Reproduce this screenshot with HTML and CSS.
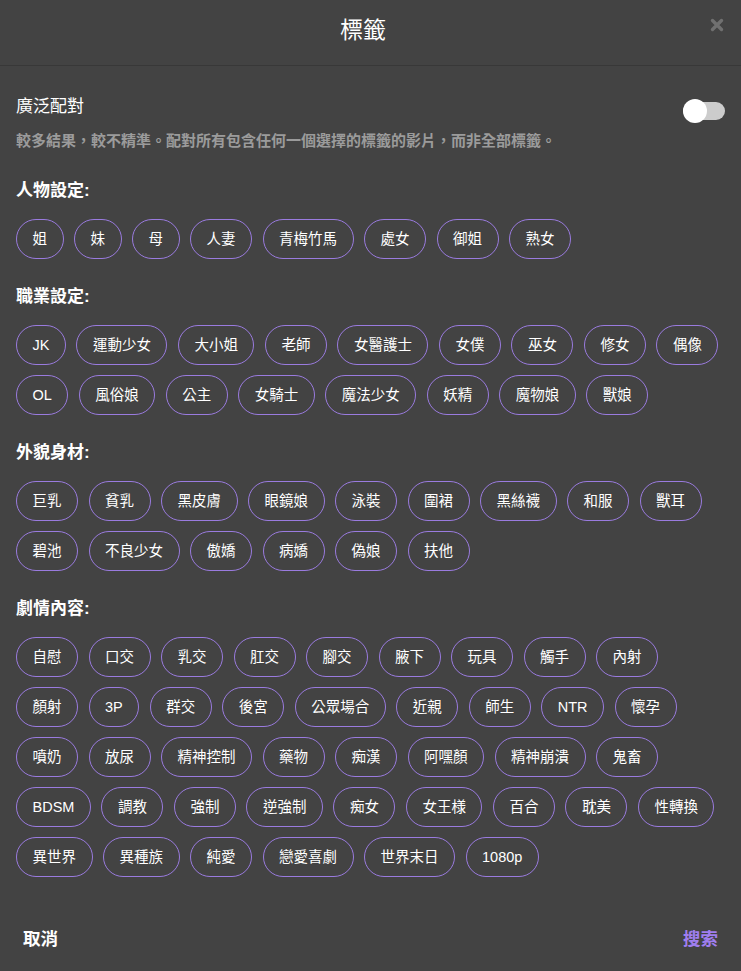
FILE: index.html
```html
<!DOCTYPE html>
<html lang="zh-Hant">
<head>
<meta charset="utf-8">
<title>標籤</title>
<link rel="stylesheet" href="styles.css">
</head>
<body>
<div class="modal">
  <header class="modal-header">
    <h1 class="modal-title">標籤</h1>
    <button class="close-btn" aria-label="close">
      <svg width="14" height="14" viewBox="0 0 14 14"><path d="M2.5 2.5 L11.5 11.5 M11.5 2.5 L2.5 11.5" stroke="#707070" stroke-width="3.4" stroke-linecap="round"/></svg>
    </button>
  </header>
  <main class="modal-body">
    <div class="option-row">
      <span class="option-label">廣泛配對</span>
      <span class="toggle"><span class="toggle-knob"></span></span>
    </div>
    <p class="option-desc">較多結果，較不精準。配對所有包含任何一個選擇的標籤的影片，而非全部標籤。</p>

    <section class="group">
      <h2 class="group-title">人物設定:</h2>
      <div class="tags">
        <span class="tag">姐</span><span class="tag">妹</span><span class="tag">母</span><span class="tag">人妻</span><span class="tag">青梅竹馬</span><span class="tag">處女</span><span class="tag">御姐</span><span class="tag">熟女</span>
      </div>
    </section>

    <section class="group">
      <h2 class="group-title">職業設定:</h2>
      <div class="tags">
        <span class="tag">JK</span><span class="tag">運動少女</span><span class="tag">大小姐</span><span class="tag">老師</span><span class="tag">女醫護士</span><span class="tag">女僕</span><span class="tag">巫女</span><span class="tag">修女</span><span class="tag">偶像</span><span class="tag">OL</span><span class="tag">風俗娘</span><span class="tag">公主</span><span class="tag">女騎士</span><span class="tag">魔法少女</span><span class="tag">妖精</span><span class="tag">魔物娘</span><span class="tag">獸娘</span>
      </div>
    </section>

    <section class="group">
      <h2 class="group-title">外貌身材:</h2>
      <div class="tags">
        <span class="tag">巨乳</span><span class="tag">貧乳</span><span class="tag">黑皮膚</span><span class="tag">眼鏡娘</span><span class="tag">泳裝</span><span class="tag">圍裙</span><span class="tag">黑絲襪</span><span class="tag">和服</span><span class="tag">獸耳</span><span class="tag">碧池</span><span class="tag">不良少女</span><span class="tag">傲嬌</span><span class="tag">病嬌</span><span class="tag">偽娘</span><span class="tag">扶他</span>
      </div>
    </section>

    <section class="group">
      <h2 class="group-title">劇情內容:</h2>
      <div class="tags">
        <span class="tag">自慰</span><span class="tag">口交</span><span class="tag">乳交</span><span class="tag">肛交</span><span class="tag">腳交</span><span class="tag">腋下</span><span class="tag">玩具</span><span class="tag">觸手</span><span class="tag">內射</span><span class="tag">顏射</span><span class="tag">3P</span><span class="tag">群交</span><span class="tag">後宮</span><span class="tag">公眾場合</span><span class="tag">近親</span><span class="tag">師生</span><span class="tag">NTR</span><span class="tag">懷孕</span><span class="tag">噴奶</span><span class="tag">放尿</span><span class="tag">精神控制</span><span class="tag">藥物</span><span class="tag">痴漢</span><span class="tag">阿嘿顏</span><span class="tag">精神崩潰</span><span class="tag">鬼畜</span><span class="tag">BDSM</span><span class="tag">調教</span><span class="tag">強制</span><span class="tag">逆強制</span><span class="tag">痴女</span><span class="tag">女王様</span><span class="tag">百合</span><span class="tag">耽美</span><span class="tag">性轉換</span><span class="tag">異世界</span><span class="tag">異種族</span><span class="tag">純愛</span><span class="tag">戀愛喜劇</span><span class="tag">世界末日</span><span class="tag">1080p</span>
      </div>
    </section>
  </main>
  <footer class="modal-footer">
    <button class="footer-btn">取消</button>
    <button class="footer-btn primary">搜索</button>
  </footer>
</div>
</body>
</html>
```

FILE: styles.css
```css
html, body {
  margin: 0;
  padding: 0;
  background: #434343;
}

body {
  font-family: "Liberation Sans", "Noto Sans CJK TC", sans-serif;
  color: #ffffff;
}

.modal {
  width: 741px;
  min-height: 971px;
  background: #434343;
}

.modal-header {
  position: relative;
  height: 59px;
  border-bottom: 1px solid #383838;
  display: flex;
  align-items: center;
  justify-content: center;
  padding: 0 15px 6px 0;
}

.modal-title {
  margin: 0;
  font-size: 23px;
  font-weight: 400;
  line-height: 28px;
  color: #ffffff;
}

.close-btn {
  position: absolute;
  right: 17px;
  top: 18px;
  width: 14px;
  height: 14px;
  padding: 0;
  border: 0;
  background: none;
  display: block;
}

.close-btn svg {
  display: block;
}

.modal-body {
  padding: 29px 16px 0;
}

.option-row {
  display: flex;
  justify-content: space-between;
  align-items: flex-start;
}

.option-label {
  font-size: 17px;
  line-height: 24px;
}

.toggle {
  position: relative;
  width: 42px;
  height: 18px;
  margin-top: 7px;
  border-radius: 9px;
  background: #cccccc;
}

.toggle-knob {
  position: absolute;
  left: 0;
  top: -3px;
  width: 24px;
  height: 24px;
  border-radius: 50%;
  background: #ffffff;
}

.option-desc {
  margin: 11px 0 0;
  font-size: 15px;
  line-height: 20px;
  font-weight: 700;
  color: #9b9b9b;
}

.group {
  margin-top: 28px;
}

.group + .group {
  margin-top: 26px;
}

.group-title {
  margin: 0;
  font-size: 17px;
  line-height: 24px;
  font-weight: 700;
}

.tags {
  margin-top: 16px;
  display: flex;
  flex-wrap: wrap;
  column-gap: 10.5px;
  row-gap: 10px;
}

.tag {
  display: inline-block;
  height: 38px;
  line-height: 38px;
  padding: 0 15.5px;
  border: 1px solid #9a7bdf;
  border-radius: 20px;
  font-size: 14.5px;
  white-space: nowrap;
}

.modal-footer {
  margin-top: 50px;
  padding: 0 16px;
  display: flex;
  justify-content: space-between;
}

.footer-btn {
  border: 0;
  background: none;
  padding: 0 7px;
  font-family: "Liberation Sans", "Noto Sans CJK TC", sans-serif;
  font-size: 17.5px;
  line-height: 24px;
  font-weight: 700;
  color: #ffffff;
}

.footer-btn.primary {
  color: #a07ef0;
}
```
